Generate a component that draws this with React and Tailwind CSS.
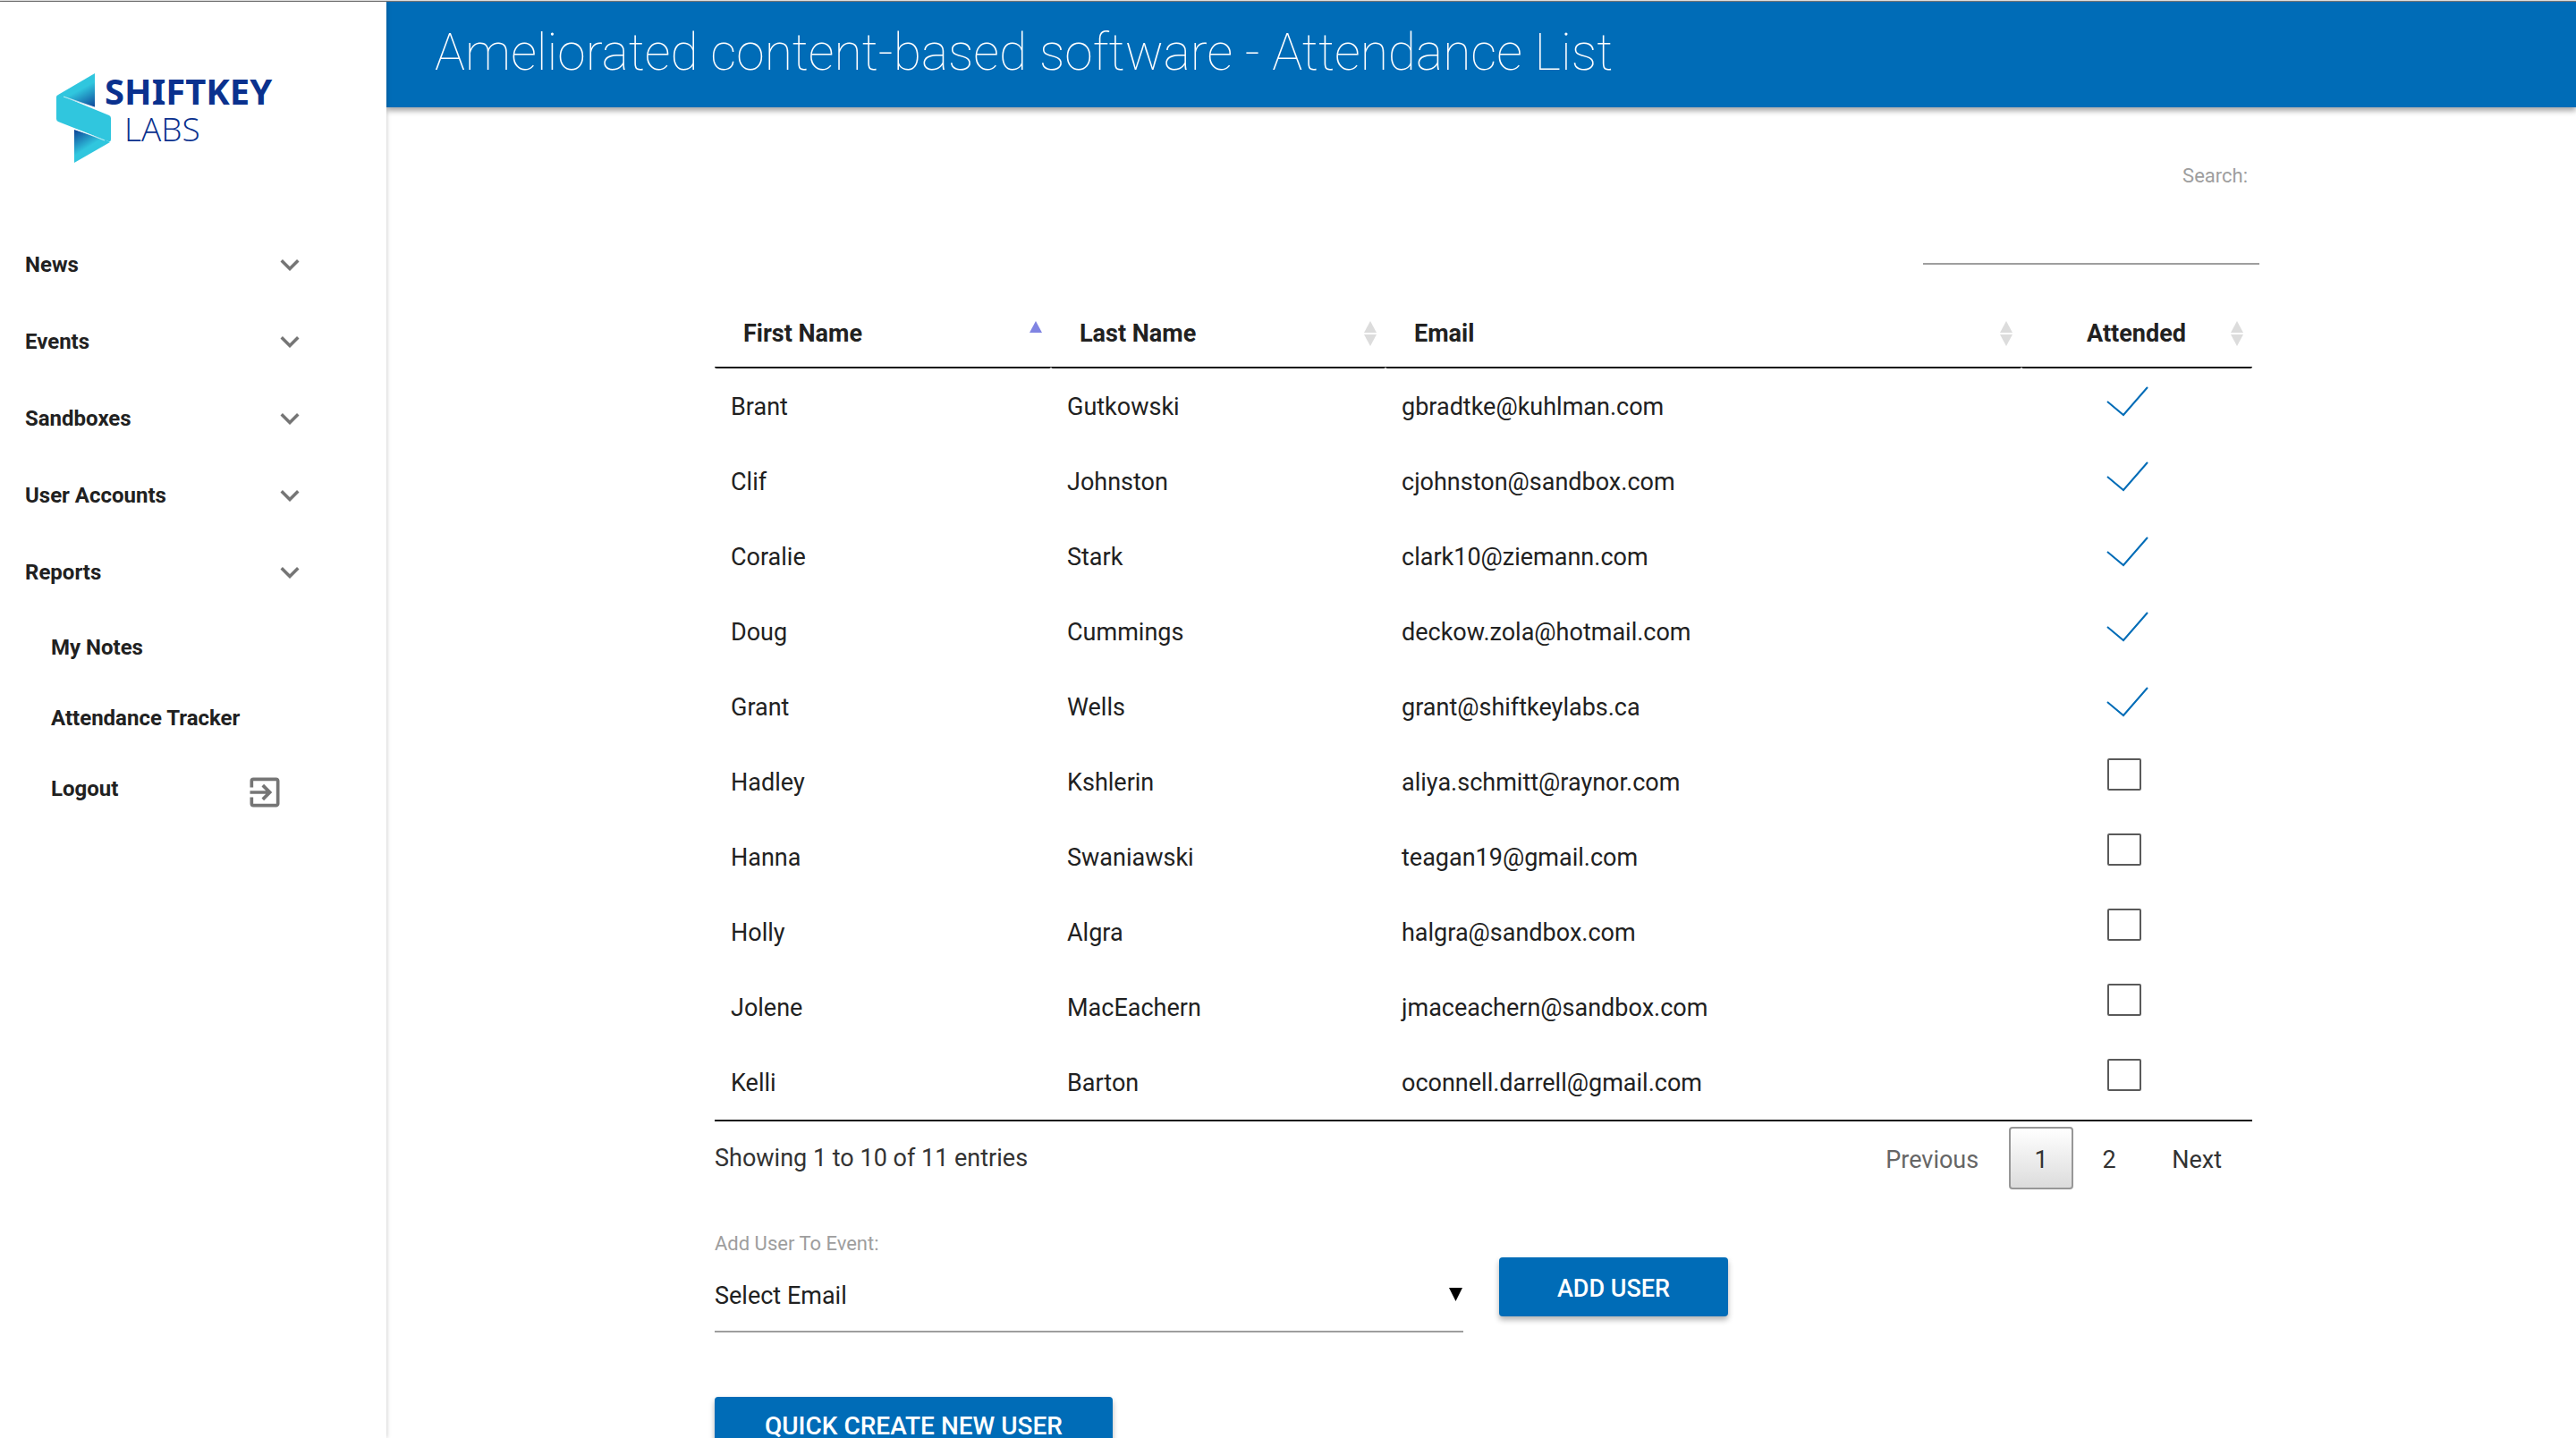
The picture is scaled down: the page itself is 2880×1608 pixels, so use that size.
import { MdExpandMore, MdExitToApp } from "react-icons/md";

const sections = ["News", "Events", "Sandboxes", "User Accounts", "Reports"];

const people = [
  ["Brant", "Gutkowski", "gbradtke@kuhlman.com", true],
  ["Clif", "Johnston", "cjohnston@sandbox.com", true],
  ["Coralie", "Stark", "clark10@ziemann.com", true],
  ["Doug", "Cummings", "deckow.zola@hotmail.com", true],
  ["Grant", "Wells", "grant@shiftkeylabs.ca", true],
  ["Hadley", "Kshlerin", "aliya.schmitt@raynor.com", false],
  ["Hanna", "Swaniawski", "teagan19@gmail.com", false],
  ["Holly", "Algra", "halgra@sandbox.com", false],
  ["Jolene", "MacEachern", "jmaceachern@sandbox.com", false],
  ["Kelli", "Barton", "oconnell.darrell@gmail.com", false],
];

const columns = [
  { name: "First Name", width: "w-[376px]", sorted: true },
  { name: "Last Name", width: "w-[374px]" },
  { name: "Email", width: "w-auto" },
  { name: "Attended", width: "w-[258px]", center: true },
];

function Logo() {
  return (
    <svg viewBox="0 -20 250 140" className="h-[140px] w-[250px]" role="img" aria-label="Shiftkey Labs">
      <defs>
        <linearGradient id="foldTop" gradientUnits="userSpaceOnUse" x1="24" y1="14" x2="40" y2="43">
          <stop offset="0.2" stopColor="#30c6de" />
          <stop offset="1" stopColor="#0b3d94" />
        </linearGradient>
        <linearGradient id="foldBottom" gradientUnits="userSpaceOnUse" x1="39" y1="90" x2="22" y2="63">
          <stop offset="0.2" stopColor="#30c6de" />
          <stop offset="1" stopColor="#0b3d94" />
        </linearGradient>
      </defs>
      <path d="M43 2 L2 26 L6 28 L43 40 Z" fill="url(#foldTop)" />
      <path d="M20 65 L54 76 L60 79 L20 102 Z" fill="url(#foldBottom)" />
      <path d="M0 29 Q0 26 3 26 L59 49 Q61 50 61 52 V76 Q61 79 58 78 L2 56 Q0 55 0 53 Z" fill="#30c6de" />
      <path d="M8 28 L43 40 M20 64 L54 77" stroke="#fff" strokeOpacity="0.7" strokeWidth="1" />
      <text x="54" y="37" fill="#0a318e" fontFamily="'Noto Sans', sans-serif" fontWeight="700" fontSize="40">
        SHIFTKEY
      </text>
      <text x="76" y="78" fill="#0a318e" fontFamily="'Open Sans', sans-serif" fontWeight="300" fontSize="37">
        LABS
      </text>
    </svg>
  );
}

function SortIcon({ sorted }) {
  return (
    <svg viewBox="0 0 16 28" className="h-7 w-4 shrink-0" aria-hidden="true">
      <path d="M8 0 L15 13 H1 Z" fill={sorted ? "#8084e2" : "#dcdcdc"} />
      {!sorted && <path d="M8 28 L15 15 H1 Z" fill="#dcdcdc" />}
    </svg>
  );
}

function Sidebar() {
  return (
    <aside className="relative w-[432px] shrink-0 bg-white shadow-[0_0_5px_rgba(0,0,0,0.25)]">
      <a href="#home" className="block pt-[58px] pl-[63px]">
        <Logo />
      </a>
      <nav className="pt-[53px] text-2xl font-bold text-[#212121]">
        {sections.map((name) => (
          <button key={name} type="button" className="flex h-[86px] w-full items-center justify-between pr-[87px] pl-7">
            {name}
            <MdExpandMore className="size-[42px] text-[#757575]" />
          </button>
        ))}
        <div className="pt-px">
          <a href="#notes" className="flex h-[79px] items-center pl-[57px]">My Notes</a>
          <a href="#tracker" className="flex h-[79px] items-center pl-[57px]">Attendance Tracker</a>
          <a href="#logout" className="flex h-[79px] items-center justify-between pr-[114px] pl-[57px]">
            Logout
            <MdExitToApp className="mt-2 size-11 text-[#757575]" />
          </a>
        </div>
      </nav>
    </aside>
  );
}

function AttendedBox({ name, checked }) {
  return (
    <span className="inline-grid pb-4">
      <input
        type="checkbox"
        defaultChecked={checked}
        aria-label={`${name} attended`}
        className="peer col-start-1 row-start-1 h-9 w-[38px] appearance-none rounded-xs border-2 border-[#5a5a5a] checked:border-transparent"
      />
      <svg
        viewBox="0 0 38 36"
        className="pointer-events-none invisible col-start-1 row-start-1 h-9 w-[38px] overflow-visible peer-checked:visible"
        fill="none"
        stroke="#006cb7"
        strokeWidth="2"
        aria-hidden="true"
      >
        <path d="M0 21 L18 36 L45 5" />
      </svg>
    </span>
  );
}

function AttendanceTable() {
  return (
    <table className="w-full table-fixed border-separate border-spacing-0 border-b-2 border-[#111]">
      <thead>
        <tr>
          {columns.map((c) => (
            <th key={c.name} className={`${c.width} h-20 rounded-xs border-b-2 border-[#111] p-0 pt-1 text-left font-bold`}>
              <button
                type="button"
                className={`flex w-full items-center justify-between pr-[9px] ${c.center ? "pl-6" : "pl-8"}`}
              >
                <span className={c.center ? "flex-1 text-center" : ""}>{c.name}</span>
                <SortIcon sorted={c.sorted} />
              </button>
            </th>
          ))}
        </tr>
      </thead>
      <tbody>
        {people.map(([first, last, email, attended]) => (
          <tr key={email} className="h-[84px]">
            <td className="px-[18px] pt-0.5 pb-0">{first}</td>
            <td className="px-[18px] pt-0.5 pb-0">{last}</td>
            <td className="px-[18px] pt-0.5 pb-0">{email}</td>
            <td className="p-0 pr-7 text-center align-middle">
              <AttendedBox name={first} checked={attended} />
            </td>
          </tr>
        ))}
      </tbody>
    </table>
  );
}

export default function App() {
  return (
    <div className="flex h-screen flex-col overflow-hidden border-t border-[#ddd] bg-white font-[Roboto,sans-serif] text-[27px] text-[#212121]">
      <div className="flex min-h-0 flex-1 border-t border-[#777]">
        <Sidebar />
        <div className="flex min-w-0 flex-1 flex-col">
          <header className="flex h-[118px] shrink-0 items-center bg-[#006cb7] pb-1.5 pl-[54px] shadow-[0_4px_6px_rgba(0,0,0,0.35)]">
            <h1 className="text-[57px] leading-none font-thin text-white">
              Ameliorated content-based software - Attendance List
            </h1>
          </header>
          <main className="min-h-0 flex-1 overflow-y-auto pr-[362px] pb-16 pl-[367px] [scrollbar-width:none]">
            <div className="-mr-2 flex flex-col items-end pt-[61px]">
              <label htmlFor="search" className="pr-[13px] text-[22px] leading-8 text-[#9e9e9e]">Search:</label>
              <input id="search" type="search" className="h-[83px] w-[376px] border-b-2 border-[#9e9e9e] outline-none" />
            </div>
            <div className="pt-9">
              <AttendanceTable />
            </div>
            <div className="flex items-start justify-between text-[#333]">
              <p className="pt-[21px] leading-10">Showing 1 to 10 of 11 entries</p>
              <div className="flex gap-1 pt-1.5 pr-1">
                <button type="button" className="h-[70px] px-[30px] pt-1 text-[#666]">Previous</button>
                <button type="button" className="h-[70px] w-[72px] rounded-sm border-2 border-[#979797] bg-linear-to-b from-white to-[#dcdcdc] pt-1">1</button>
                <button type="button" className="h-[70px] w-[72px] pt-1">2</button>
                <button type="button" className="h-[70px] px-[30px] pt-1">Next</button>
              </div>
            </div>
            <div className="flex items-start gap-10 pt-[45px]">
              <div className="flex w-[837px] flex-col">
                <label htmlFor="email" className="text-[22px] leading-8 text-[#9e9e9e]">Add User To Event:</label>
                <div className="grid items-center border-b-2 border-[#9e9e9e]">
                  <select id="email" className="col-start-1 row-start-1 h-[81px] w-full appearance-none pt-1 outline-none">
                    <option>Select Email</option>
                  </select>
                  <svg viewBox="0 0 16 16" className="pointer-events-none col-start-1 row-start-1 size-4 justify-self-end" aria-hidden="true">
                    <path d="M0 0 H15 L7.5 15 Z" />
                  </svg>
                </div>
              </div>
              <button type="button" className="mt-[31px] h-[66px] w-64 rounded-sm bg-[#006cb7] pt-1 font-medium text-white shadow-[0_4px_6px_rgba(0,0,0,0.3)]">
                ADD USER
              </button>
            </div>
            <button type="button" className="mt-[72px] h-[66px] rounded-sm bg-[#006cb7] px-14 text-[28px] font-medium text-white shadow-[0_4px_6px_rgba(0,0,0,0.3)]">
              QUICK CREATE NEW USER
            </button>
          </main>
        </div>
      </div>
    </div>
  );
}
